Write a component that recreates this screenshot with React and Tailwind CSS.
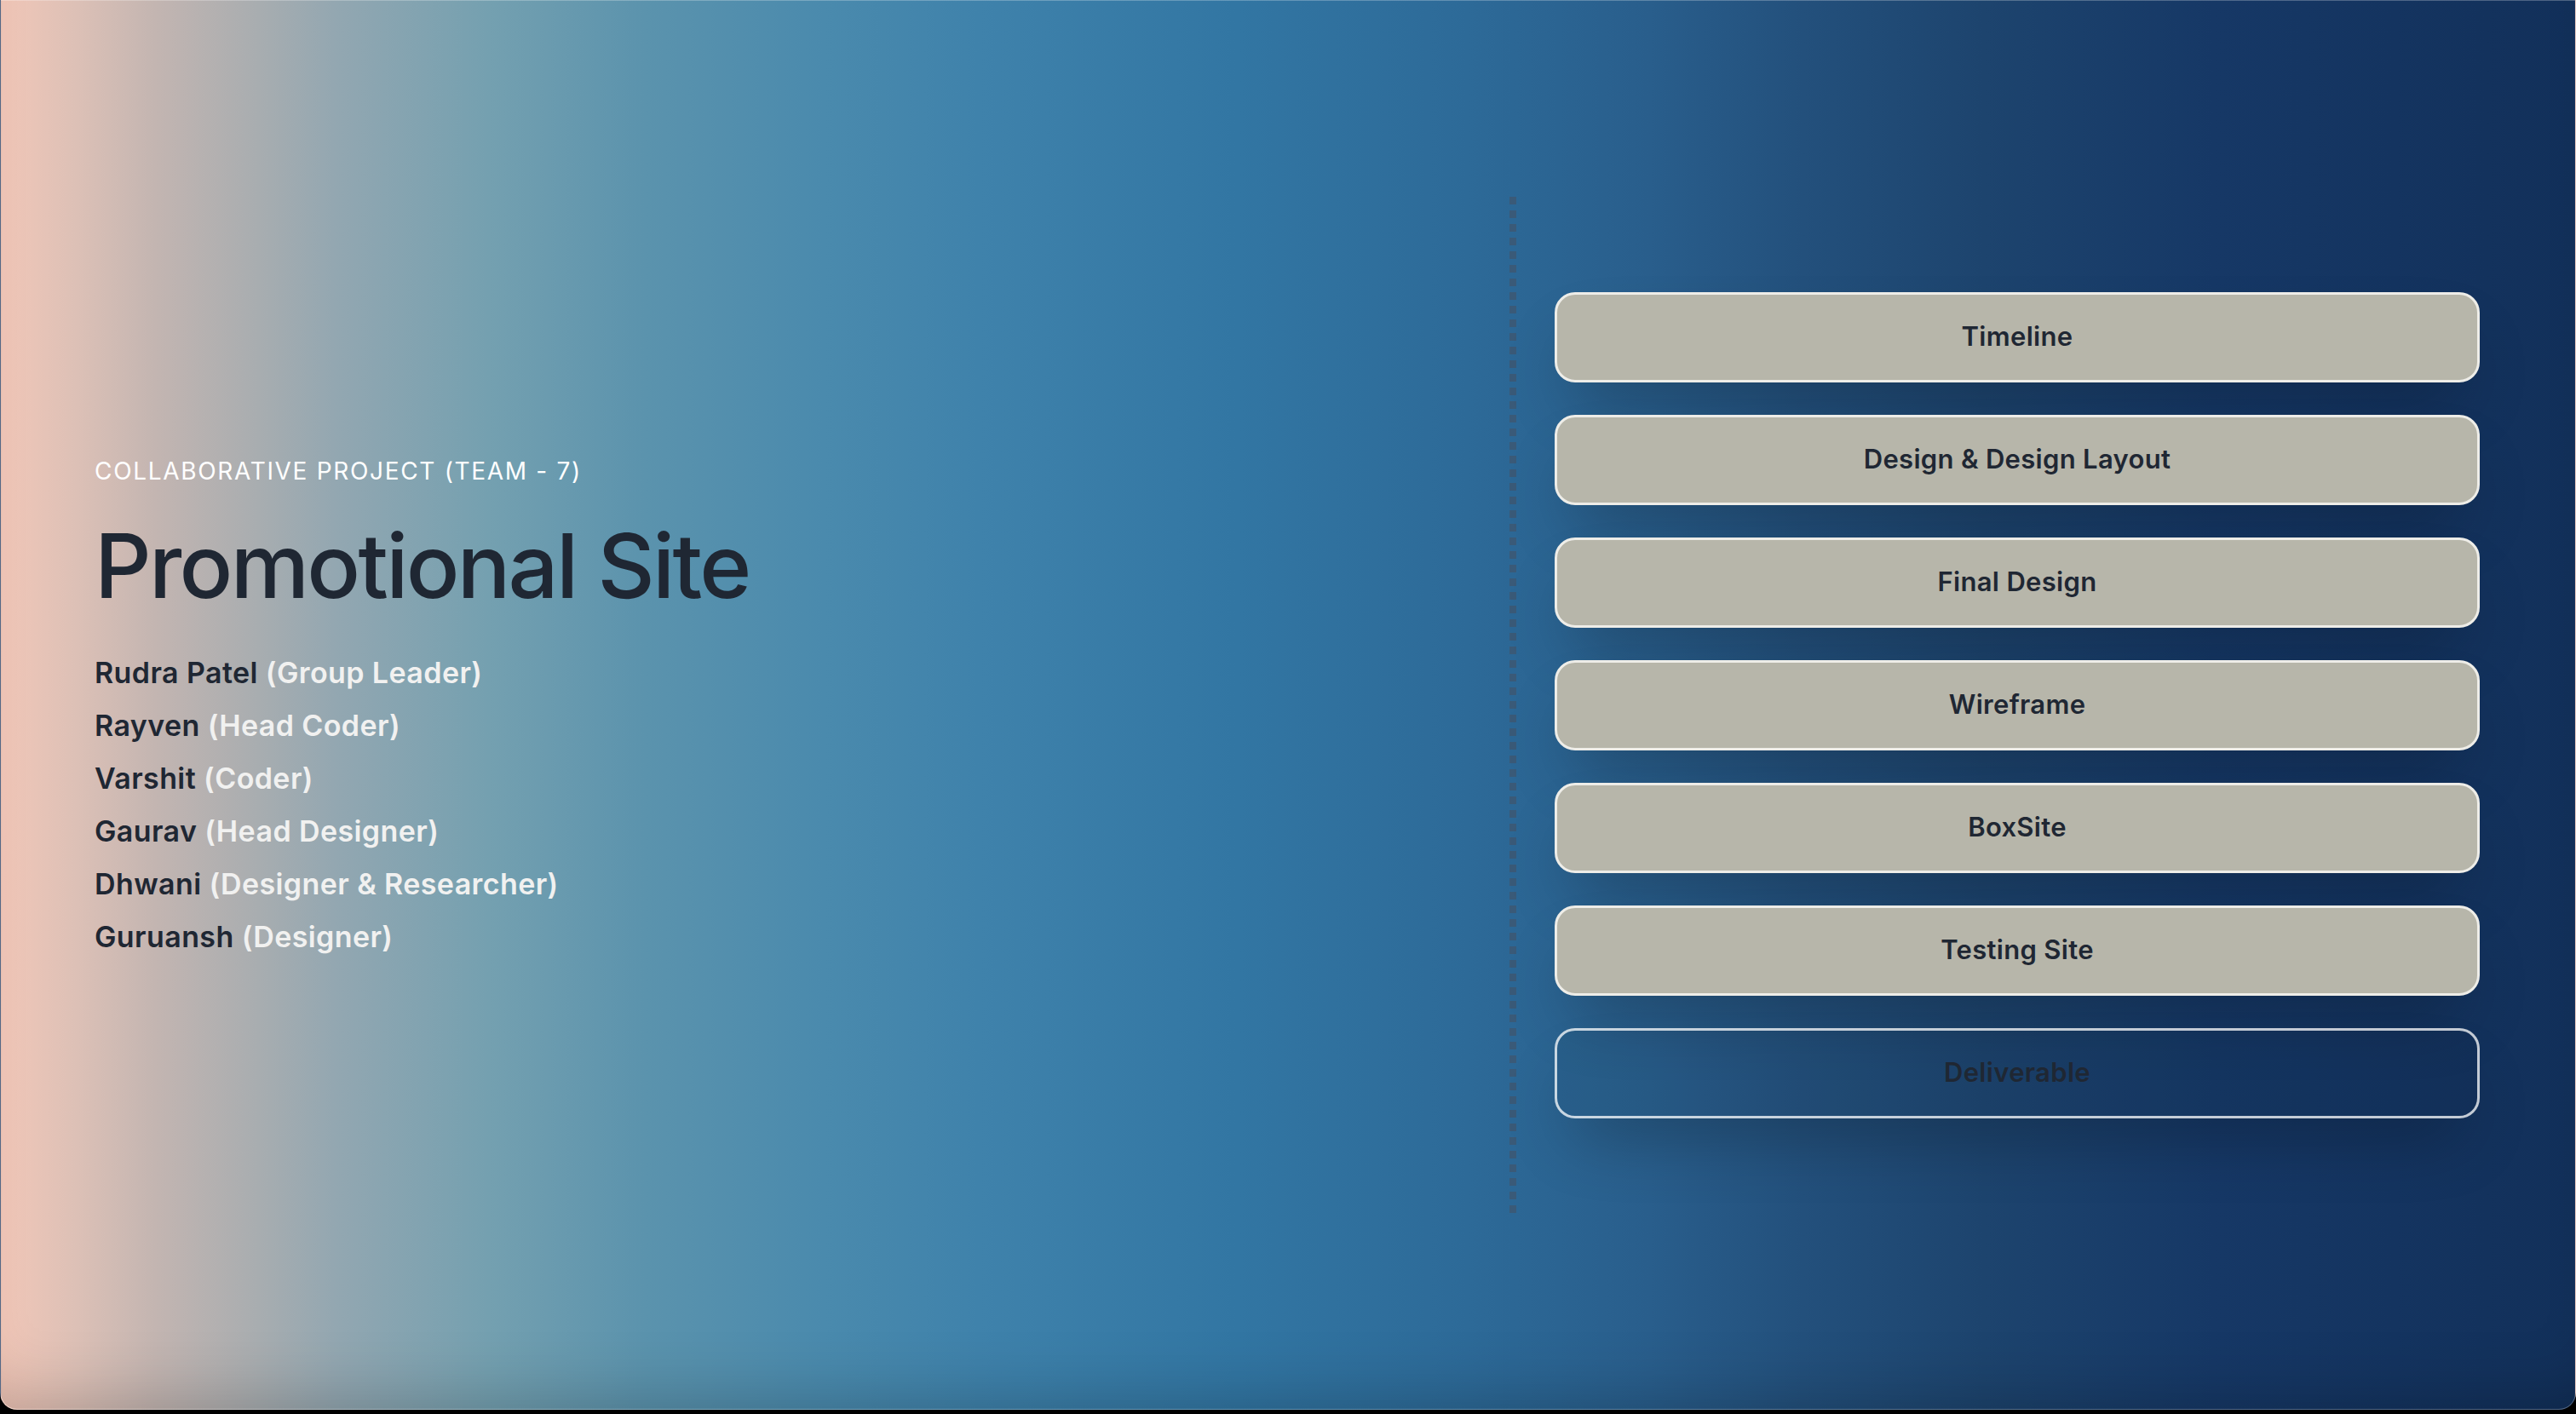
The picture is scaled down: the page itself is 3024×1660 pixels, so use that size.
import React from "react";

const team = [
  { name: "Rudra Patel", role: "(Group Leader)" },
  { name: "Rayven", role: "(Head Coder)" },
  { name: "Varshit", role: "(Coder)" },
  { name: "Gaurav", role: "(Head Designer)" },
  { name: "Dhwani", role: "(Designer & Researcher)" },
  { name: "Guruansh", role: "(Designer)" },
];

const links = [
  { label: "Timeline" },
  { label: "Design & Design Layout" },
  { label: "Final Design" },
  { label: "Wireframe" },
  { label: "BoxSite" },
  { label: "Testing Site" },
  { label: "Deliverable", muted: true },
];

function LinkButton({ label, muted }) {
  if (muted) {
    return (
      <button className="h-[106px] w-full rounded-[24px] border-[3px] border-white/75 bg-black/5 text-[31px] font-semibold tracking-[0.01em] text-[#1f2733] shadow-[0_40px_80px_-24px_rgba(0,0,0,0.3)]">
        {label}
      </button>
    );
  }
  return (
    <button className="h-[106px] w-full rounded-[24px] border-[3px] border-[#eeede8] bg-[#b7b6aa] text-[31px] font-semibold tracking-[0.01em] text-[#1f2733] shadow-[0_40px_80px_-24px_rgba(0,0,0,0.3)]">
      {label}
    </button>
  );
}

export default function App() {
  return (
    <div
      className="h-[1660px] w-[3024px] overflow-hidden bg-black"
      style={{ fontFamily: "Inter, 'Noto Sans', sans-serif" }}
    >
      <div className="flex h-[1655px] w-full items-center rounded-b-[20px] border border-white/25 bg-[linear-gradient(90deg,#f2c7b8_0%,#dcc0b6_3%,#c3b5b1_6%,#a8adb0_10%,#93a7b1_13%,#74a0b0_19%,#5b93ad_25%,#4a8aad_32%,#3f82ab_38%,#3276a3_48%,#2d6a98_57%,#295e8c_64%,#23507c_70%,#1d446e_77%,#163866_86%,#12305a_100%)] pl-[110px] pr-[112px] shadow-[inset_0_-60px_80px_-50px_rgba(0,0,0,0.22)]">
        {/* project intro */}
        <div className="flex flex-1 flex-col pt-[10px]">
          <p className="text-[28px] leading-[36px] tracking-[0.06em] text-white">
            COLLABORATIVE PROJECT (TEAM - 7)
          </p>
          <h1 className="mt-[40px] text-[104px] font-medium leading-[106px] tracking-[-0.026em] text-[#1f2733]">
            Promotional Site
          </h1>
          <ul className="mt-[42px] flex flex-col">
            {team.map((m) => (
              <li
                key={m.name}
                className="text-[34px] font-semibold leading-[62px] tracking-[0.012em] text-[#1f2733]"
              >
                {m.name} <span className="text-[#f1f1f0]">{m.role}</span>
              </li>
            ))}
          </ul>
        </div>

        {/* divider + navigation */}
        <div className="flex items-stretch">
          <div className="w-[8px] bg-[repeating-linear-gradient(to_bottom,#3a5a78_0px,#3a5a78_9px,transparent_9px,transparent_16px)]" />
          <nav className="ml-[45px] flex w-[1086px] flex-col gap-[38px] py-[112px]">
            {links.map((l) => (
              <LinkButton key={l.label} label={l.label} muted={l.muted} />
            ))}
          </nav>
        </div>
      </div>
    </div>
  );
}
